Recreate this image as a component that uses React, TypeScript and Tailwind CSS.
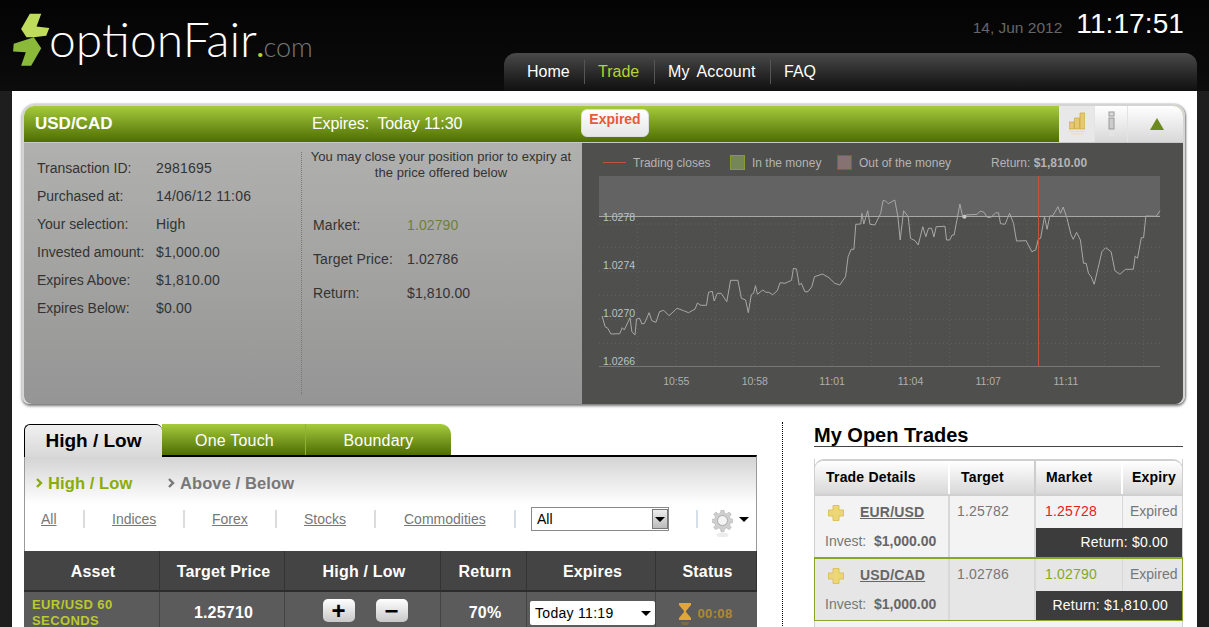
import React from "react";

const font = { fontFamily: '"Liberation Sans", Arial, sans-serif' };

// chart trace, read off the reference in zoom coordinates
const raw: [number, number][] = [
  [32,513],[40,545],[47,550],[55,567],[78,566],[85,548],[90,555],[105,518],[110,560],[118,570],[122,522],[130,520],[136,537],[143,535],[155,503],[162,527],[173,532],[182,500],[193,496],[207,512],[228,490],[245,497],[258,503],[275,492],[281,474],[290,481],[305,481],[310,442],[320,439],[325,468],[333,445],[343,445],[358,470],[368,406],[387,406],[396,460],[407,465],[414,503],[422,449],[428,445],[433,422],[438,448],[452,435],[460,442],[468,442],[478,449],[490,437],[497,413],[510,415],[527,406],[532,370],[540,372],[547,420],[553,415],[562,440],[570,440],[580,425],[587,395],[608,387],[625,398],[640,415],[653,420],[668,395],[675,335],[683,313],[690,313],[695,238],[708,237],[711,205],[716,237],[726,197],[732,238],[745,240],[760,205],[766,167],[772,167],[780,176],[797,165],[805,215],[811,285],[820,197],[832,215],[838,280],[850,287],[858,300],[870,245],[878,275],[885,250],[893,250],[899,276],[905,245],[928,244],[932,285],[940,285],[947,270],[952,270],[967,177],[975,218],[983,210],[1012,208],[1020,198],[1030,202],[1038,217],[1048,217],[1060,204],[1068,203],[1073,236],[1085,238],[1097,205],[1107,235],[1115,288],[1140,287],[1155,320],[1165,315],[1172,283],[1178,280],[1188,215],[1195,253],[1202,213],[1210,212],[1223,185],[1230,205],[1237,186],[1247,220],[1257,268],[1263,283],[1272,262],[1282,285],[1290,355],[1297,355],[1303,385],[1310,395],[1318,418],[1328,370],[1338,320],[1348,308],[1362,320],[1372,377],[1385,388],[1400,373],[1420,373],[1425,333],[1431,340],[1441,278],[1447,278],[1453,213],[1480,214],[1490,197],
];
const cx = (x: number) => ((x - 24) / 2.613).toFixed(1);
const cy = (y: number) => ((y - 93) / 3).toFixed(1);
const trace = raw.map(([x, y]) => `${cx(x)},${cy(y)}`).join(" ");

const details = [
  ["Transaction ID:", "2981695"],
  ["Purchased at:", "14/06/12 11:06"],
  ["Your selection:", "High"],
  ["Invested amount:", "$1,000.00"],
  ["Expires Above:", "$1,810.00"],
  ["Expires Below:", "$0.00"],
];

const Logo = () => (
  <div className="flex items-end self-start pl-[13px] pt-[13px]">
    <svg width="37" height="53" viewBox="38 40 110 158">
      <path d="M88 42 L122 42 L108 80 L146 85 L137 108 L100 112 L78 112 L62 88 Z" fill="#bfdc5c" />
      <path d="M40 132 L100 112 L122 145 L92 197 L62 197 L76 157 L38 155 Z" fill="#8bb93a" />
    </svg>
    <span className="ml-[-1px] mb-[1px] text-[48px] leading-[52px] font-light text-white" style={{ fontFamily: 'Lato, sans-serif' }}>optionFair</span>
    <span className="mb-[4px] text-[27px] leading-[30px] font-light text-[#777]" style={{ fontFamily: 'Lato, sans-serif' }}>
      <span className="font-bold text-[#b5d334]">.</span>com
    </span>
  </div>
);

const Header = () => (
  <div className="flex h-[91px] justify-between bg-gradient-to-b from-[#040404] to-[#0c0c0c]">
    <Logo />
    <div className="mr-[12px] flex w-[693px] flex-col justify-end">
      <div className="mb-[13px] flex items-end justify-end pr-[13px]">
        <span className="mr-[14px] mb-[2px] text-[15.500px] leading-[20px] text-[#666]">14, Jun 2012</span>
        <span className="text-[28px] leading-[32px] tracking-[0.1px] text-white">11:17:51</span>
      </div>
      <div className="flex h-[38px] items-center rounded-t-[12px] bg-gradient-to-b from-[#4a4a4a] to-[#101010] pl-[23px] text-[16px] text-white">
        <span className="w-[57px]">Home</span>
        <span className="w-[70px] border-l border-[#555] pl-[13px] leading-[24px] text-[#b5d334]">Trade</span>
        <span className="w-[116px] border-l border-[#555] pl-[13px] leading-[24px] tracking-[0.2px] [word-spacing:3px]">My Account</span>
        <span className="border-l border-[#555] pl-[13px] leading-[24px]">FAQ</span>
      </div>
    </div>
  </div>
);

const TabIcons = () => (
  <div className="flex h-[36px] w-[124px] bg-gradient-to-b from-white to-[#d8d8d8]">
    <div className="flex w-[35px] items-center justify-center bg-[#e8e8e8]">
      <svg width="16" height="24" viewBox="0 0 16 24">
        <path d="M0 10h5v7H0zM5.500 6h5v11h-5zM11 1h5v16h-5z" fill="#e5c870" stroke="#c9a63e" strokeWidth="0.7" />
        <path d="M0 19h16v1H0zM2 21.500h12v1H2z" fill="#e8dcb4" />
      </svg>
    </div>
    <div className="flex w-[34px] items-center justify-center border-l border-r border-[#e4e4e4]">
      <svg width="7" height="26" viewBox="0 0 7 26">
        <rect x="1" y="1" width="5" height="4" fill="#ddd" stroke="#999" />
        <rect x="1" y="7" width="5" height="11" fill="#ccc" stroke="#999" />
        <rect x="1" y="21" width="5" height="4" fill="#e4e4e4" />
      </svg>
    </div>
    <div className="flex flex-1 items-center justify-center pl-[3px]">
      <div className="h-0 w-0 border-x-[7px] border-b-[12px] border-x-transparent border-b-[#6b8a1e]" />
    </div>
  </div>
);

const Chart = () => (
  <div className="w-[601px] bg-[#4f4f4d] text-[12px] text-[#b4b4b4]">
    <div className="flex h-[33px] items-center pt-[6px] pl-[21px]">
      <div className="h-px w-[23px] bg-[#c05040]" />
      <span className="ml-[7px] w-[97px]">Trading closes</span>
      <div className="h-[15px] w-[15px] border border-[#8a9c2e] bg-[#758657]" />
      <span className="ml-[7px] w-[85px]">In the money</span>
      <div className="h-[15px] w-[15px] border border-[#b34444] bg-[#877272]" />
      <span className="ml-[7px] w-[132px]">Out of the money</span>
      <span>Return: <b>$1,810.00</b></span>
    </div>
    <svg width="601" height="227" viewBox="-17 0 601 227" className="block" style={font}>
      <rect x="0" y="0" width="561" height="40" fill="#636363" />
      {[124, 226, 328, 431, 532, 633, 735, 838, 940, 1041, 1143, 1244, 1346, 1447].map((x) => (
        <line key={x} x1={cx(x)} x2={cx(x)} y1="0" y2="191" stroke="#626260" strokeDasharray="1 3" />
      ))}
      {[165, 237, 307, 379, 451, 523, 595].map((y) => (
        <line key={y} x1="0" x2="561" y1={cy(y)} y2={cy(y)} stroke="#626260" strokeDasharray="1 3" />
      ))}
      <line x1="0" x2="561" y1="40.500" y2="40.500" stroke="#a8a8a6" />
      <line x1="0" x2="561" y1="190.500" y2="190.500" stroke="#777" />
      <polyline points={trace} fill="none" stroke="#a8a8a6" strokeWidth="1" />
      <circle cx={cx(979)} cy={cy(215)} r="2" fill="#c8c8c8" />
      <line x1="439.500" x2="439.500" y1="0" y2="190" stroke="#c8503c" />
      {[["1.0278", 217], ["1.0274", 359], ["1.0270", 503], ["1.0266", 647]].map(([t, y]) => (
        <text key={t} x="4" y={Number(cy(y as number)) + 4} fontSize="10.500" fill="#b8c4c8">{t}</text>
      ))}
      {[["10:55", 226], ["10:58", 431], ["11:01", 633], ["11:04", 838], ["11:07", 1041], ["11:11", 1244]].map(([t, x]) => (
        <text key={t} x={cx(x as number)} y="209" fontSize="10.500" fill="#b0b0b0" textAnchor="middle">{t}</text>
      ))}
    </svg>
  </div>
);

const TradePanel = () => (
  <div className="relative -ml-px w-[1163px] rounded-t-[12px] rounded-b-[8px] border-2 border-[#d4d4d4] border-b-0 shadow-[0_2px_3px_#777,1px_0_2px_#999]">
    <div className="flex h-[36px] overflow-hidden rounded-t-[10px] bg-gradient-to-b from-[#a6cc3c] to-[#4f6e00] pl-[11px] text-white">
      <b className="w-[277px] pt-[8px] text-[17px] leading-[20px]">USD/CAD</b>
      <span className="w-[269px] pt-[9px] text-[16px] leading-[18px] tracking-[-0.1px]">Expires:&nbsp; Today 11:30</span>
      <div className="mt-[3px] h-[28px] w-[68px] rounded-[6px] border border-[#ddd] bg-gradient-to-b from-white to-[#e6e6e6] pt-[1px] text-center text-[14px] leading-[16px] font-bold text-[#e9593a]">Expired</div>
      <div className="ml-auto">
        <TabIcons />
      </div>
    </div>
    <div className="flex h-[262px] overflow-hidden rounded-b-[8px] border-t border-[#c8c8c8] bg-gradient-to-b from-[#b0b0ae] to-[#959595] text-[14px] text-[#333]">
      <div className="w-[277px] pt-[11px] pl-[13px]">
        {details.map(([k, v]) => (
          <div key={k} className="flex h-[28px] items-center">
            <span className="w-[119px]">{k}</span>
            <span className="tracking-[0.2px]">{v}</span>
          </div>
        ))}
      </div>
      <div className="my-[9px] w-[281px] border-l border-dotted border-[#777] pl-[4px]">
        <p className="-mt-[3px] w-[270px] text-center text-[13px] leading-[16px] tracking-[0.05px]">You may close your position prior to expiry at the price offered below</p>
        <div className="mt-[27px] pl-[7px] tracking-[0.1px]">
          <div className="flex h-[34px] items-center"><span className="w-[94px]">Market:</span><span className="text-[#6f7f3a]">1.02790</span></div>
          <div className="flex h-[34px] items-center"><span className="w-[94px]">Target Price:</span><span>1.02786</span></div>
          <div className="flex h-[34px] items-center"><span className="w-[94px]">Return:</span><span>$1,810.00</span></div>
        </div>
      </div>
      <Chart />
    </div>
  </div>
);

const Triangle = ({ className }: { className: string }) => (
  <div className={`h-0 w-0 border-x-[5px] border-t-[5px] border-x-transparent ${className}`} />
);

const Chevron = ({ color }: { color: string }) => (
  <svg width="7" height="10" viewBox="0 0 7 10" className="mr-[5px] inline-block">
    <path d="M1 1l4 4-4 4" fill="none" stroke={color} strokeWidth="2.400" />
  </svg>
);

const Gear = () => (
  <svg width="21" height="28" viewBox="0 0 21 28">
    <path d="M9 0h3l.5 3 2.200.9 2.500-1.800 2.100 2.100-1.800 2.500.9 2.200 3 .5v3l-3 .5-.9 2.200 1.800 2.500-2.100 2.100-2.500-1.800-2.200.9-.5 3H9l-.5-3-2.200-.9-2.500 1.800-2.100-2.100 1.800-2.500-.9-2.200-3-.5v-3l3-.5.9-2.200L1.700 4.200 3.800 2.100l2.500 1.800L8.500 3z" fill="#cfcfcf" stroke="#a8a8a8" strokeWidth="0.5" />
    <circle cx="10.500" cy="10.500" r="5" fill="#f4f4f4" stroke="#aaa" />
    <path d="M4 24q6.500-3 13 0l-2 3H6z" fill="#ececec" />
  </svg>
);

const Hourglass = () => (
  <svg width="14" height="23" viewBox="0 0 14 23">
    <path d="M1 0h12v2l-5 6v1l5 6v2H1v-2l5-6V8L1 2z" fill="#e0a63c" />
    <path d="M3 19h8l-1 3H4z" fill="#7f6a44" />
  </svg>
);

const filters = [
  { label: "Indices", cls: "w-[100px] pl-[27px]" },
  { label: "Forex", cls: "w-[92px] pl-[27px]" },
  { label: "Stocks", cls: "w-[99px] pl-[27px]" },
  { label: "Commodities", cls: "w-[140px] pl-[28px]" },
];

const AssetTable = () => (
  <div className="w-[733px]">
    <div className="relative z-10 flex h-[31px]">
      <div className="flex h-[33px] w-[138px] items-center justify-center rounded-t-[6px] border-t border-l border-black bg-gradient-to-b from-[#f0f0f0] to-[#d8d8d8] text-[19px] font-bold text-black">High / Low</div>
      <div className="flex w-[144px] items-center justify-center border-r border-[#8cb332] bg-gradient-to-b from-[#a6cc3c] to-[#4f6e00] pt-[2px] pl-[2px] text-[16px] tracking-[0.2px] text-white">One Touch</div>
      <div className="flex w-[145px] items-center justify-center rounded-tr-[10px] bg-gradient-to-b from-[#a6cc3c] to-[#4f6e00] pt-[2px] text-[16px] tracking-[0.2px] text-white">Boundary</div>
    </div>
    <div className="h-[96px] border-t-2 border-r border-l border-t-black border-x-[#999] bg-gradient-to-b from-[#d4d4d4] via-white via-50% to-white">
      <div className="flex h-[50px] items-center pt-[2px] pl-[11px] text-[16.500px] font-bold tracking-[0.1px]">
        <span className="flex w-[132px] items-center text-[#8aac0a]"><Chevron color="#8aac0a" />High / Low</span>
        <span className="flex items-center text-[#777]"><Chevron color="#777" />Above / Below</span>
      </div>
      <div className="mt-[3px] flex items-center pl-[16px] text-[14px] text-[#777]">
        <div className="flex h-[18px] w-[42px] items-center underline">All</div>
        {filters.map((f) => (
          <div key={f.label} className={`flex h-[18px] items-center border-l-2 border-[#dcdcdc] underline ${f.cls}`}>{f.label}</div>
        ))}
        <div className="flex h-[18px] w-[182px] items-center border-l-2 border-[#d4dfe8] pl-[15px]">
          <div className="flex h-[24px] w-[138px] items-center justify-between border border-[#888] bg-white pl-[5px] text-[14px] text-black">
            All
            <div className="flex h-[20px] w-[16px] items-center justify-center border border-[#777] bg-gradient-to-b from-[#eee] to-[#bbb]"><Triangle className="border-t-black" /></div>
          </div>
        </div>
        <div className="flex h-[18px] items-center border-l-2 border-[#d4dfe8] pl-[14px]">
          <div className="mt-[10px]"><Gear /></div>
          <Triangle className="ml-[6px] border-t-black" />
        </div>
      </div>
    </div>
    <div className="grid grid-cols-[136px_125px_156px_86px_129px_101px] bg-[#444] text-[16px] font-bold tracking-[0.2px] text-white">
      {["Asset", "Target Price", "High / Low", "Return", "Expires", "Status"].map((h) => (
        <div key={h} className="flex h-[41px] items-center justify-center border-r border-[#333] border-b-2 border-b-[#2c2c2c] pt-[2px] pl-[3px]">{h}</div>
      ))}
    </div>
    <div className="grid h-[40px] grid-cols-[136px_125px_156px_86px_129px_101px] bg-[#5b5b5b] text-[16px] font-bold tracking-[0.2px] text-white">
      <div className="border-r border-[#444] pt-[5px] pl-[8px] text-[13px] leading-[16px] tracking-[0.4px] text-[#b9c92e]">EUR/USD 60 SECONDS</div>
      <div className="flex items-start justify-center border-r border-[#444] pt-[12px] pl-[3px] leading-[18px]">1.25710</div>
      <div className="flex items-start justify-center gap-[21px] border-r border-[#444] pt-[7px] pl-[5px]">
        <div className="flex h-[23px] w-[32px] items-center justify-center rounded-[5px] bg-gradient-to-b from-white to-[#c8c8c8] text-[24px] leading-none text-black">+</div>
        <div className="flex h-[23px] w-[32px] items-center justify-center rounded-[5px] bg-gradient-to-b from-white to-[#c8c8c8] text-[24px] leading-none text-black">−</div>
      </div>
      <div className="flex items-start justify-center border-r border-[#444] pt-[12px] pl-[3px] leading-[18px]">70%</div>
      <div className="border-r border-[#444] pt-[9px] pl-[3px]">
        <div className="flex h-[24px] w-[125px] items-center justify-between rounded-[2px] bg-white pr-[4px] pl-[5px] text-[14px] font-normal tracking-[0.3px] text-black">
          Today 11:19
          <Triangle className="border-t-black" />
        </div>
      </div>
      <div className="flex items-start justify-center gap-[5px] pt-[11px] pr-[2px] text-[13px] tracking-[0.4px] text-[#b0892c]">
        <Hourglass />
        <span className="mt-px leading-[20px]">00:08</span>
      </div>
    </div>
  </div>
);

const PlusIcon = () => (
  <svg width="16" height="16" viewBox="0 0 16 16" className="shrink-0">
    <path d="M5 .5h6V5h4.500v6H11v4.500H5V11H.5V5H5z" fill="#ecd676" stroke="#dcc25a" />
  </svg>
);

const TradeRow = ({ pair, target, market, marketCls, ret, rowCls }: { pair: string; target: string; market: string; marketCls: string; ret: string; rowCls: string }) => (
  <div className={`grid grid-cols-[135px_86px_87px_59px] grid-rows-[32px_29px] text-[14px] tracking-[0.2px] text-[#777] ${rowCls}`}>
    <div className="row-span-2 border-r-2 border-[#d8d8d8] pt-[6px] pl-[13px]">
      <div className="flex items-center">
        <PlusIcon />
        <b className="ml-[16px] text-[#666] underline">{pair}</b>
      </div>
      <div className="mt-[8px] -ml-[3px] tracking-normal">Invest:&nbsp; <b className="text-[#666]">$1,000.00</b></div>
    </div>
    <div className="row-span-2 border-r-2 border-[#d8d8d8] pt-[5px] pl-[7px]">{target}</div>
    <div className={`border-r border-[#d8d8d8] pt-[5px] pl-[9px] ${marketCls}`}>{market}</div>
    <div className="pt-[5px] pl-[7px] tracking-normal">Expired</div>
    <div className="col-span-2 flex items-center justify-end bg-[#3c3c3c] pr-[14px] text-white">{ret}</div>
  </div>
);

const OpenTrades = () => (
  <div className="w-[369px]">
    <div className="border-b border-[#444] text-[20px] leading-[22px] font-bold text-black">My Open Trades</div>
    <div className="mt-[12px] border-x border-[#d0d0d0]">
      <div className="-mx-px overflow-hidden rounded-t-[10px] border-x border-t-2 border-[#d0d0d0]">
        <div className="grid h-[33px] grid-cols-[135px_86px_87px_59px] bg-gradient-to-b from-white to-[#d8d8d8] text-[14px] font-bold tracking-[0.2px] text-black">
          <div className="flex items-center border-r-2 border-white pl-[11px]">Trade Details</div>
          <div className="flex items-center border-r-2 border-[#ccc] pl-[11px]">Target</div>
          <div className="flex items-center border-r-2 border-white pl-[10px]">Market</div>
          <div className="flex items-center pl-[9px]">Expiry</div>
        </div>
      </div>
      <div className="border-t-2 border-[#d0d0d0]">
        <TradeRow pair="EUR/USD" target="1.25782" market="1.25728" marketCls="text-[#e8201c]" ret="Return: $0.00" rowCls="bg-[#f3f3f3]" />
      </div>
      <div className="-mx-px border-x border-t-2 border-b border-[#85a825]">
        <TradeRow pair="USD/CAD" target="1.02786" market="1.02790" marketCls="text-[#85a825]" ret="Return: $1,810.00" rowCls="bg-[#e6e6e6]" />
      </div>
      <div className="h-[10px] bg-[#f3f3f3]" />
    </div>
  </div>
);

export default function App() {
  return (
    <div className="h-[627px] w-[1209px] overflow-hidden bg-[#1e1e1e]" style={font}>
      <Header />
      <div className="mr-[12px] ml-[12px] h-[536px] bg-white px-[11px] pt-[13px]">
        <TradePanel />
        <div className="mt-[20px] flex pl-px">
          <AssetTable />
          <div className="ml-[25px] h-[210px] -mt-[2px] border-l border-dotted border-black" />
          <div className="ml-[31px]">
            <OpenTrades />
          </div>
        </div>
      </div>
    </div>
  );
}
